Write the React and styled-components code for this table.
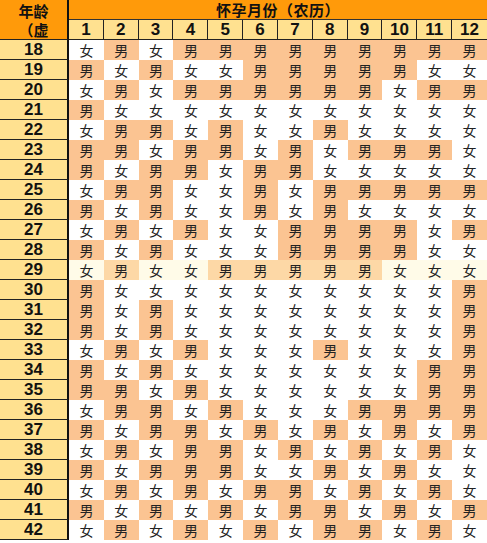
import { Fragment } from "react";
import styled, { createGlobalStyle } from "styled-components";

const GlobalStyle = createGlobalStyle`
  html, body {
    margin: 0;
    padding: 0;
    background: #ffffff;
  }
  * {
    box-sizing: border-box;
  }
`;

// 男 = boy, 女 = girl, one string per age (months 1..12)
const data = [
  [18, "女男女男男男男男男男男男"],
  [19, "男女男女女男男男男男女女"],
  [20, "女男女男男男男男男女男男"],
  [21, "男女女女女女女女女女女女"],
  [22, "女男男女男女女男女女女女"],
  [23, "男男女男男女男女男男男女"],
  [24, "男女男男女男男女女女女女"],
  [25, "女男男女女男女男男男男男"],
  [26, "男女男女女男女男女女女女"],
  [27, "女男女男女女男男男男女男"],
  [28, "男女男女女女男男男男女女"],
  [29, "女男女女男男男男男女女女"],
  [30, "男女女女女女女女女女女男"],
  [31, "男女男女女女女女女女女男"],
  [32, "男女男女女女女女女女女男"],
  [33, "女男女男女女女男女女女男"],
  [34, "男女男女女女女女女女男男"],
  [35, "男男女男女女女女女女男男"],
  [36, "女男男女男女女女男男男男"],
  [37, "男女男男女男女男女男女男"],
  [38, "女男女男男女男女男女男女"],
  [39, "男女男男男女女男女男女女"],
  [40, "女男女男女男男女男女男女"],
  [41, "男女男女男女男男女男女男"],
  [42, "女男女男女男女男男女男女"],
];

const months = [1, 2, 3, 4, 5, 6, 7, 8, 9, 10, 11, 12];

const Chart = styled.div`
  width: 487px;
  display: grid;
  grid-template-columns: 69px repeat(12, 1fr);
  grid-auto-rows: 20px;
  font-family: "Liberation Sans", Arial, "Noto Sans CJK SC", sans-serif;
`;

const AgeHead = styled.div`
  grid-row: span 2;
  background: #ff9a0a;
  border-right: 2px solid #111;
  border-bottom: 1px solid #222;
  display: flex;
  flex-direction: column;
  align-items: center;
  padding-top: 1px;
  font-family: "Noto Sans CJK SC", sans-serif;
  font-weight: 700;
  font-size: 15px;
  line-height: 19px;
  color: #111;
  overflow: hidden;
`;

const Title = styled.div`
  grid-column: span 12;
  background: #ff9a0a;
  border-bottom: 1px solid #333;
  display: flex;
  align-items: center;
  justify-content: center;
  font-family: "Noto Sans CJK SC", sans-serif;
  font-weight: 700;
  font-size: 15px;
  color: #111;
  letter-spacing: 0.5px;
`;

const Month = styled.div`
  background: #ffe190;
  border-right: ${(p) => (p.$last ? "none" : "1px solid #222")};
  border-bottom: 1px solid #222;
  display: flex;
  align-items: center;
  justify-content: center;
  font-weight: 700;
  font-size: 17px;
  color: #111;
`;

const Age = styled.div`
  background: #ffe190;
  border-right: 2px solid #111;
  border-bottom: 1px solid #222;
  display: flex;
  align-items: center;
  justify-content: center;
  font-weight: 700;
  font-size: 17px;
  color: #111;
`;

const Cell = styled.div`
  background: ${(p) =>
    p.$soft
      ? p.$boy
        ? "#fdd8a6"
        : "#fffbe8"
      : p.$boy
        ? "#fbc492"
        : "#ffffff"};
  display: flex;
  align-items: center;
  justify-content: center;
  font-family: "Noto Sans CJK SC", sans-serif;
  font-size: 14px;
  color: #222;
`;

export default function App() {
  return (
    <>
      <GlobalStyle />
      <Chart>
        <AgeHead>
          <span>年龄</span>
          <span>（虚</span>
        </AgeHead>
        <Title>怀孕月份（农历）</Title>
        {months.map((m) => (
          <Month key={m} $last={m === 12}>
            {m}
          </Month>
        ))}
        {data.map(([age, row]) => (
          <Fragment key={age}>
            <Age>{age}</Age>
            {row.split("").map((g, i) => (
              <Cell key={i} $boy={g === "男"} $soft={age === 29}>
                {g}
              </Cell>
            ))}
          </Fragment>
        ))}
      </Chart>
    </>
  );
}
